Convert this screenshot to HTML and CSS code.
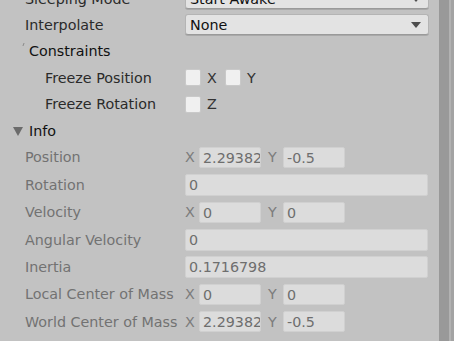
FILE: index.html
```html
<!DOCTYPE html>
<html>
<head>
<meta charset="utf-8">
<link rel="stylesheet" href="styles.css">
</head>
<body>
<div class="page">
  <div class="inspector">
    <div class="row">
      <div class="label">Sleeping Mode</div>
      <div class="dropdown"><span>Start Awake</span><i class="arrow"></i></div>
    </div>
    <div class="row">
      <div class="label">Interpolate</div>
      <div class="dropdown"><span>None</span><i class="arrow"></i></div>
    </div>
    <div class="row">
      <div class="label fold"><i class="tick"></i>Constraints</div>
    </div>
    <div class="row">
      <div class="label nested">Freeze Position</div>
      <div class="checks">
        <span class="check"></span><span class="axis">X</span>
        <span class="check"></span><span class="axis">Y</span>
      </div>
    </div>
    <div class="row">
      <div class="label nested">Freeze Rotation</div>
      <div class="checks">
        <span class="check"></span><span class="axis">Z</span>
      </div>
    </div>
    <div class="row">
      <div class="label head"><i class="tri"></i>Info</div>
    </div>
    <div class="row info">
      <div class="label dim">Position</div>
      <div class="vec"><span class="vl">X</span><span class="field small">2.29382</span><span class="vl vy">Y</span><span class="field small">-0.5</span></div>
    </div>
    <div class="row info">
      <div class="label dim">Rotation</div>
      <div class="field wide">0</div>
    </div>
    <div class="row info">
      <div class="label dim">Velocity</div>
      <div class="vec"><span class="vl">X</span><span class="field small">0</span><span class="vl vy">Y</span><span class="field small">0</span></div>
    </div>
    <div class="row info">
      <div class="label dim">Angular Velocity</div>
      <div class="field wide">0</div>
    </div>
    <div class="row info">
      <div class="label dim">Inertia</div>
      <div class="field wide">0.1716798</div>
    </div>
    <div class="row info">
      <div class="label dim">Local Center of Mass</div>
      <div class="vec"><span class="vl">X</span><span class="field small">0</span><span class="vl vy">Y</span><span class="field small">0</span></div>
    </div>
    <div class="row info">
      <div class="label dim">World Center of Mass</div>
      <div class="vec"><span class="vl">X</span><span class="field small">2.29382</span><span class="vl vy">Y</span><span class="field small">-0.5</span></div>
    </div>
  </div>
  <div class="scrollbar"><div class="thumb"></div><div class="edge"></div></div>
</div>
</body>
</html>
```

FILE: styles.css
```css
html, body {
  margin: 0;
  padding: 0;
  background: #c2c2c2;
  overflow: hidden;
}
body {
  width: 454px;
  height: 341px;
  font-family: "DejaVu Sans", Verdana, sans-serif;
  font-size: 14.3px;
  color: #1e1e1e;
}
.page {
  display: flex;
  height: 341px;
}
.inspector {
  width: 439px;
  margin-top: -14.6px;
}
.row {
  display: flex;
  align-items: center;
  height: 26.4px;
}
.row.info {
  height: 27.36px;
}
.label {
  flex: 0 0 185px;
  box-sizing: border-box;
  padding-left: 25px;
  white-space: nowrap;
  color: #2a2a2a;
  position: relative;
}
.label.nested {
  padding-left: 45px;
  color: #2a2a2a;
}
.label.fold {
  padding-left: 29px;
  color: #111;
}
.label.head {
  padding-left: 29px;
  color: #111;
}
.label.dim {
  color: #727272;
}
.tick {
  position: absolute;
  left: 23px;
  top: 0px;
  width: 1px;
  height: 3px;
  background: #8a8a8a;
  transform: skewX(-20deg);
}
.tri {
  position: absolute;
  left: 13px;
  top: 50%;
  margin-top: -4px;
  width: 0;
  height: 0;
  border-left: 5.5px solid transparent;
  border-right: 5.5px solid transparent;
  border-top: 9px solid #6b6b6b;
}
.dropdown {
  box-sizing: border-box;
  width: 244px;
  height: 21px;
  background: #e3e3e3;
  border: 1px solid #b4b4b4;
  border-bottom-color: #9a9a9a;
  border-radius: 3px;
  box-shadow: 0 1px 0 #a9a9a9;
  display: flex;
  align-items: center;
  padding-left: 4px;
  padding-right: 7px;
  color: #111;
}
.dropdown span {
  flex: 1;
}
.arrow {
  width: 0;
  height: 0;
  border-left: 5px solid transparent;
  border-right: 5px solid transparent;
  border-top: 6px solid #4d4d4d;
}
.checks {
  display: flex;
  align-items: center;
}
.check {
  box-sizing: border-box;
  width: 16px;
  height: 17px;
  background: #f0f0f0;
  border: 1px solid #c9c9c9;
  border-radius: 2px;
}
.axis {
  width: 18px;
  padding-left: 6px;
  color: #333;
}
.vec {
  display: flex;
  align-items: center;
}
.vl {
  width: 14px;
  color: #7c7c7c;
}
.vl.vy {
  width: 15px;
  margin-left: 7px;
}
.field {
  box-sizing: border-box;
  height: 21px;
  line-height: 21px;
  background: #dcdcdc;
  border: 1px solid #d0d0d0;
  border-radius: 2px;
  padding-left: 3px;
  color: #6e6e6e;
  white-space: nowrap;
  overflow: hidden;
}
.field.small {
  width: 62px;
}
.field.wide {
  width: 243px;
  height: 22px;
  line-height: 21px;
}
.scrollbar {
  flex: 0 0 15px;
  display: flex;
  background: #a3a3a3;
}
.thumb {
  width: 10px;
  background: #999999;
}
.edge {
  width: 2px;
  background: #b2b2b2;
}
```
